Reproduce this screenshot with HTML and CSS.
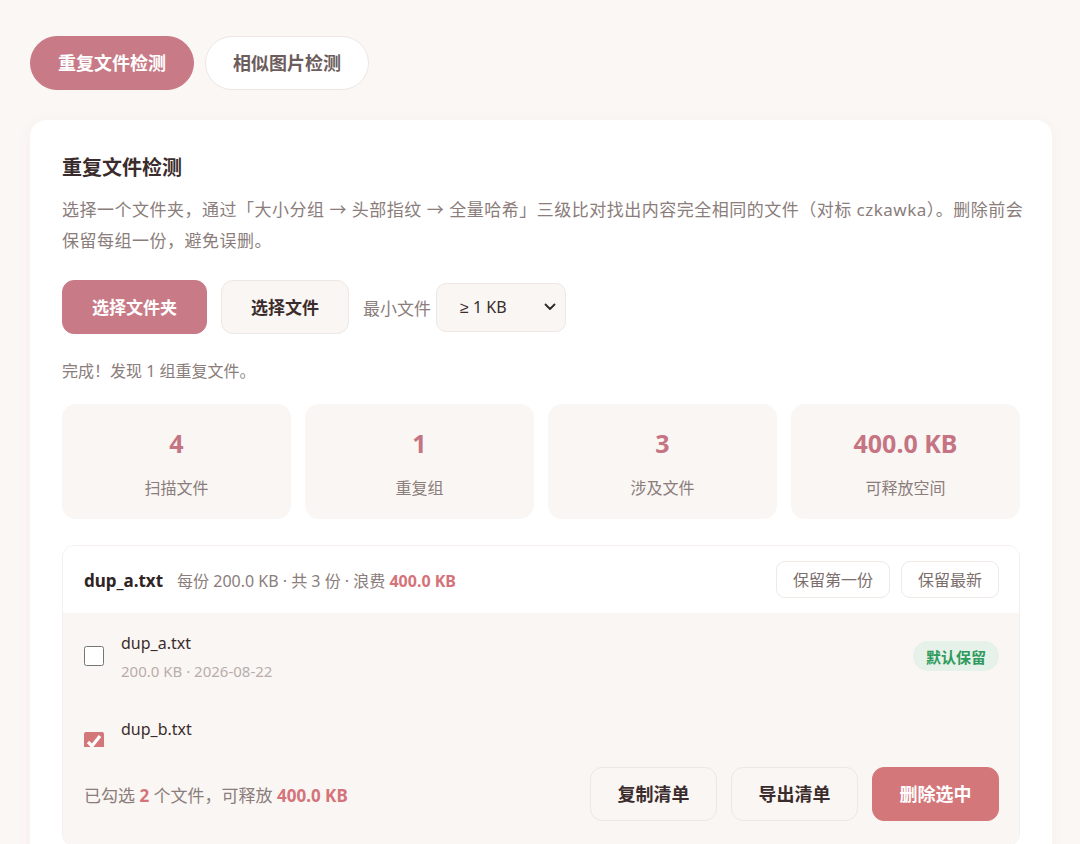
FILE: index.html
```html
<!DOCTYPE html>
<html lang="zh-CN">
<head>
<meta charset="utf-8">
<title>重复文件检测</title>
<link rel="stylesheet" href="styles.css">
</head>
<body>
<div class="page">
  <nav class="tabs">
    <button class="tab tab-active">重复文件检测</button>
    <button class="tab">相似图片检测</button>
  </nav>

  <section class="card">
    <h1 class="title">重复文件检测</h1>
    <p class="desc">选择一个文件夹，通过「大小分组 → 头部指纹 → 全量哈希」三级比对找出内容完全相同的文件（对标 czkawka）。删除前会保留每组一份，避免误删。</p>

    <div class="toolbar">
      <button class="btn btn-primary">选择文件夹</button>
      <button class="btn btn-light">选择文件</button>
      <div class="field">
        <span class="field-label">最小文件</span>
        <div class="select">
          <span><span class="sym">≥</span> 1 KB</span>
          <svg width="12" height="8" viewBox="0 0 12 8"><path d="M1.5 1.5 6 6l4.5-4.5" fill="none" stroke="#2f2626" stroke-width="1.8" stroke-linecap="round" stroke-linejoin="round"/></svg>
        </div>
      </div>
    </div>

    <p class="status">完成！发现 1 组重复文件。</p>

    <div class="stats">
      <div class="stat"><div class="stat-num">4</div><div class="stat-label">扫描文件</div></div>
      <div class="stat"><div class="stat-num">1</div><div class="stat-label">重复组</div></div>
      <div class="stat"><div class="stat-num">3</div><div class="stat-label">涉及文件</div></div>
      <div class="stat"><div class="stat-num">400.0 KB</div><div class="stat-label">可释放空间</div></div>
    </div>

    <div class="group">
      <div class="group-head">
        <div class="group-info">
          <span class="group-name">dup_a.txt</span>
          <span class="group-meta">每份 200.0 KB · 共 3 份 · 浪费 <b class="waste">400.0 KB</b></span>
        </div>
        <div class="group-actions">
          <button class="btn-sm">保留第一份</button>
          <button class="btn-sm">保留最新</button>
        </div>
      </div>

      <ul class="files">
        <li class="file">
          <input type="checkbox" class="check">
          <div class="file-info">
            <div class="file-name">dup_a.txt</div>
            <div class="file-meta">200.0 KB · 2026-08-22</div>
          </div>
          <span class="badge">默认保留</span>
        </li>
        <li class="file">
          <input type="checkbox" class="check" checked>
          <div class="file-info">
            <div class="file-name">dup_b.txt</div>
            <div class="file-meta">200.0 KB · 2026-08-22</div>
          </div>
        </li>
        <li class="file">
          <input type="checkbox" class="check" checked>
          <div class="file-info">
            <div class="file-name">dup_c.txt</div>
            <div class="file-meta">200.0 KB · 2026-08-22</div>
          </div>
        </li>
      </ul>

      <div class="footer">
        <span class="summary">已勾选 <b class="accent">2</b> 个文件，可释放 <b class="waste">400.0 KB</b></span>
        <div class="footer-actions">
          <button class="btn btn-light">复制清单</button>
          <button class="btn btn-light">导出清单</button>
          <button class="btn btn-danger">删除选中</button>
        </div>
      </div>
    </div>
  </section>
</div>
</body>
</html>
```

FILE: styles.css
```css
* { box-sizing: border-box; }

html, body {
  margin: 0;
  background: #fbf7f4;
}

body {
  font-family: "Noto Sans", "Noto Sans CJK SC", sans-serif;
  color: #3a2d2d;
}

button {
  font-family: inherit;
  cursor: pointer;
  white-space: nowrap;
}

.page {
  width: 1022px;
  margin-left: 30px;
  padding: 36px 0 40px;
}

/* top tabs */
.tabs {
  display: flex;
  gap: 11px;
  margin-bottom: 30px;
}

.tab {
  height: 54px;
  padding: 0 27px;
  border-radius: 27px;
  border: 1.5px solid #ede6e3;
  background: #fff;
  color: #6c5d5c;
  font-size: 18px;
  font-weight: 700;
  line-height: 1;
}

.tab-active {
  background: #c87b87;
  border-color: #c87b87;
  color: #fff;
}

/* main card */
.card {
  background: #fff;
  border-radius: 16px;
  box-shadow: 0 2px 14px rgba(140, 100, 90, 0.05);
  padding: 34px 32px 32px;
}

.title {
  margin: 0;
  font-size: 20px;
  line-height: 28px;
  font-weight: 700;
  color: #3a2c2c;
}

.desc {
  margin: 12px -10px 0 0;
  font-size: 17px;
  line-height: 31px;
  letter-spacing: 0.5px;
  color: #8a7d7b;
}

.toolbar {
  display: flex;
  align-items: center;
  gap: 14px;
  margin-top: 24px;
}

.btn {
  height: 54px;
  padding: 0 29px;
  border-radius: 12px;
  font-size: 17px;
  font-weight: 700;
  line-height: 1;
  border: 1.5px solid #eee7e4;
}

.btn-primary {
  background: #c87b87;
  border-color: #c87b87;
  color: #fff;
}

.btn-light {
  background: #faf6f3;
  color: #3a2c2c;
}

.btn-danger {
  background: #d4777a;
  border-color: #d4777a;
  color: #fff;
}

.field {
  display: flex;
  align-items: center;
  gap: 5px;
}

.field-label {
  font-size: 17px;
  color: #8a7d7b;
}

.select {
  width: 130px;
  height: 49px;
  display: flex;
  align-items: center;
  justify-content: space-between;
  padding: 0 9px 0 23px;
  border: 1.5px solid #eee7e4;
  border-radius: 10px;
  background: #faf6f3;
  font-size: 16px;
  color: #3a2c2c;
}

.sym {
  font-family: "Liberation Sans", sans-serif;
}

.status {
  margin: 25px 0 0;
  font-size: 16px;
  line-height: 24px;
  color: #8a7d7b;
}

/* summary numbers */
.stats {
  display: grid;
  grid-template-columns: repeat(4, 1fr);
  gap: 14px;
  margin-top: 21px;
}

.stat {
  background: #faf6f3;
  border-radius: 14px;
  padding: 23px 0 19px;
  text-align: center;
}

.stat-num {
  font-size: 25px;
  line-height: 32px;
  font-weight: 700;
  color: #c47482;
}

.stat-label {
  margin-top: 17px;
  font-size: 16px;
  line-height: 24px;
  color: #8a7d7b;
}

/* duplicate group */
.group {
  margin-top: 26px;
  border: 1px solid #f4efec;
  border-radius: 12px;
  overflow: hidden;
}

.group-head {
  height: 67px;
  display: flex;
  align-items: center;
  justify-content: space-between;
  padding: 0 20px 0 21px;
  background: #fff;
}

.group-info {
  display: flex;
  align-items: baseline;
  gap: 14px;
}

.group-name {
  font-size: 17px;
  font-weight: 700;
  color: #2f2424;
}

.group-meta {
  font-size: 16px;
  color: #8a7d7b;
}

.waste {
  color: #d4737a;
  font-weight: 700;
}

.accent {
  color: #d4737a;
  font-weight: 700;
}

.group-actions {
  display: flex;
  gap: 11px;
}

.btn-sm {
  height: 37px;
  padding: 0 16px;
  border: 1.5px solid #efe9e6;
  border-radius: 9px;
  background: #fff;
  color: #7c6e6c;
  font-size: 16px;
  line-height: 1;
}

/* file list scrolls inside a short window */
.files {
  list-style: none;
  margin: 0;
  padding: 0;
  max-height: 134px;
  overflow-y: auto;
  scrollbar-width: none;
  background: #faf6f3;
}

.file {
  display: flex;
  align-items: center;
  gap: 17px;
  height: 86px;
  padding: 0 20px 0 21px;
}

.check {
  width: 20px;
  height: 20px;
  margin: 0;
  accent-color: #d4777a;
}

.file-info {
  flex: 1;
}

.file-name {
  font-size: 16px;
  line-height: 24px;
  color: #3a2c2c;
}

.file-meta {
  margin-top: 5px;
  font-size: 15px;
  line-height: 22px;
  color: #b9adab;
}

.badge {
  height: 30px;
  display: inline-flex;
  align-items: center;
  padding: 0 13px;
  border-radius: 15px;
  background: #e6f1e9;
  color: #2e9a5b;
  font-size: 15px;
  font-weight: 700;
}

.footer {
  display: flex;
  align-items: center;
  justify-content: space-between;
  padding: 20px 20px 24px 21px;
  background: #faf6f3;
}

.summary {
  font-size: 17px;
  color: #8a7d7b;
}

.footer-actions {
  display: flex;
  gap: 14px;
}

.footer-actions .btn {
  font-size: 18px;
  padding: 0;
  width: 127px;
}
```
